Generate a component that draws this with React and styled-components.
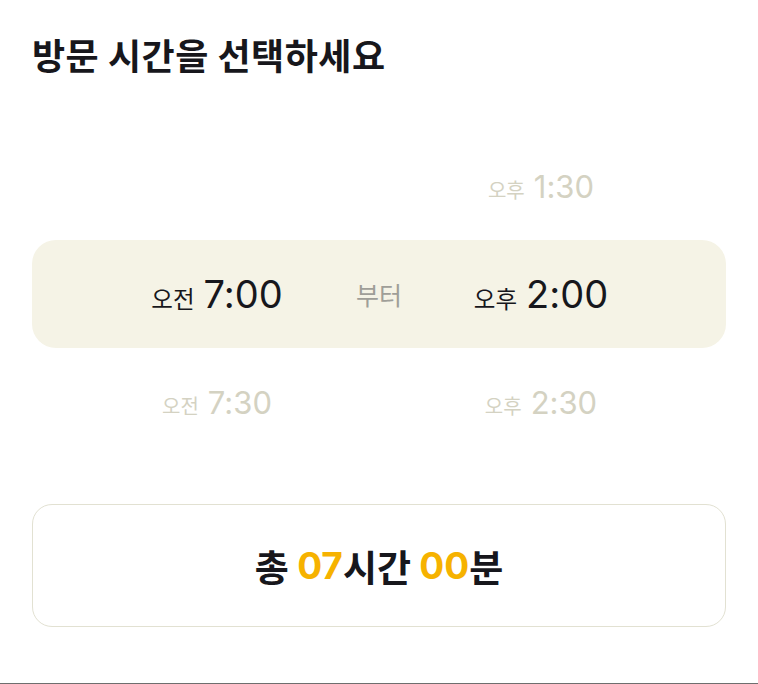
import styled, { createGlobalStyle } from 'styled-components';

const GlobalStyle = createGlobalStyle`
  html, body {
    margin: 0;
    padding: 0;
    background: #ffffff;
  }
  body {
    font-family: "Inter", "Noto Sans CJK KR", sans-serif;
    color: #17171c;
  }
`;

const startTimes = [null, { meridiem: '오전', time: '7:00' }, { meridiem: '오전', time: '7:30' }];
const endTimes = [
  { meridiem: '오후', time: '1:30' },
  { meridiem: '오후', time: '2:00' },
  { meridiem: '오후', time: '2:30' },
];

function TimeCell({ item, row, column }) {
  if (!item) return null;
  const selected = row === 2;
  return (
    <Cell $row={row} $column={column} $selected={selected}>
      <Meridiem $selected={selected}>{item.meridiem}</Meridiem>
      <Clock $selected={selected}>{item.time}</Clock>
    </Cell>
  );
}

export default function App() {
  return (
    <>
      <GlobalStyle />
      <Page>
        <Title>방문 시간을 선택하세요</Title>

        <Picker>
          <Highlight />
          {startTimes.map((item, i) => (
            <TimeCell key={`s${i}`} item={item} row={i + 1} column={1} />
          ))}
          <Separator>부터</Separator>
          {endTimes.map((item, i) => (
            <TimeCell key={`e${i}`} item={item} row={i + 1} column={3} />
          ))}
        </Picker>

        <TotalBox>
          총 <Accent>07</Accent>시간 <Accent>00</Accent>분
        </TotalBox>
      </Page>
    </>
  );
}

const Page = styled.main`
  box-sizing: border-box;
  min-height: 100vh;
  padding: 30px 32px 0 32px;
  border-bottom: 1px solid #6e6e6e;
`;

const Title = styled.h1`
  margin: 0;
  font-family: "Noto Sans CJK KR", sans-serif;
  font-size: 36px;
  line-height: 48px;
  font-weight: 700;
  letter-spacing: 0.5px;
  color: #17171c;
`;

const Picker = styled.section`
  margin-top: 54px;
  display: grid;
  grid-template-columns: 1fr auto 1fr;
  grid-template-rows: repeat(3, 108px);
  padding: 0 46px;
`;

const Highlight = styled.div`
  grid-row: 2;
  grid-column: 1 / -1;
  margin: 0 -46px;
  background: #f5f3e6;
  border-radius: 24px;
`;

const Cell = styled.div`
  grid-row: ${(p) => p.$row};
  grid-column: ${(p) => p.$column};
  display: flex;
  align-items: baseline;
  justify-content: center;
  align-self: center;
  gap: ${(p) => (p.$selected ? '9px' : '9px')};
  color: ${(p) => (p.$selected ? '#17171c' : '#d4d2c2')};
`;

const Meridiem = styled.span`
  font-family: "Noto Sans CJK KR", sans-serif;
  font-size: ${(p) => (p.$selected ? '23.5px' : '20px')};
  font-weight: 400;
`;

const Clock = styled.span`
  font-family: "Inter", sans-serif;
  font-feature-settings: "calt" 0;
  font-size: ${(p) => (p.$selected ? '38px' : '31px')};
  font-weight: 400;
`;

const Separator = styled.div`
  grid-row: 2;
  grid-column: 2;
  align-self: center;
  font-family: "Noto Sans CJK KR", sans-serif;
  font-size: 25px;
  color: #9f9e98;
`;

const TotalBox = styled.div`
  margin-top: 48px;
  height: 123px;
  box-sizing: border-box;
  border: 1px solid #e2e1d2;
  border-radius: 20px;
  display: flex;
  align-items: center;
  justify-content: center;
  font-family: "Noto Sans CJK KR", sans-serif;
  font-size: 37px;
  font-weight: 700;
  white-space: pre;
  color: #17171c;
`;

const Accent = styled.span`
  font-family: "Inter", sans-serif;
  color: #f6b200;
`;
